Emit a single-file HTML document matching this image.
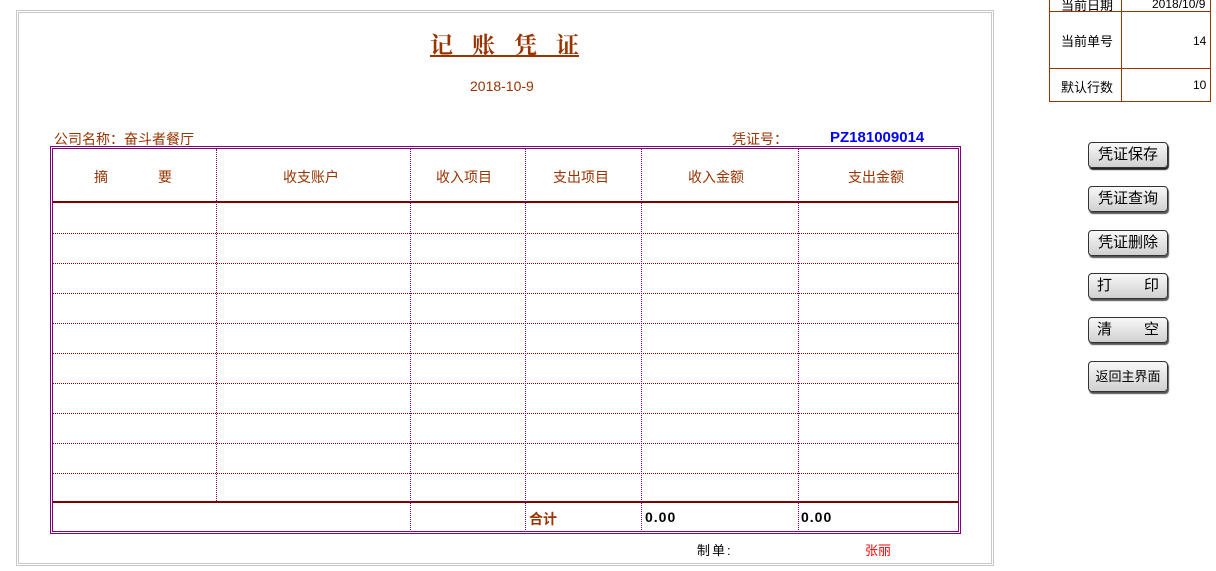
<!DOCTYPE html>
<html><head><meta charset="utf-8"><style>
body{margin:0;width:1216px;height:571px;background:#fff;position:relative;overflow:hidden;font-family:"Liberation Sans","Noto Sans CJK SC",sans-serif}
.a{position:absolute}
.t{position:absolute;font-size:14px;color:#993300;white-space:nowrap}
.h{position:absolute;left:53px;width:905px;height:0;border-top:1px dotted #800000}
.v{position:absolute;width:0;border-left:1px dotted #800080}
.btn{position:absolute;left:1088px;width:78px;height:24px;border:1px solid #333;border-radius:4px;background:linear-gradient(#f8f8f8,#d0d0d0);box-shadow:1px 2px 1px #555;font-size:15px;color:#000;text-align:center;line-height:24px;font-family:"Liberation Sans","Noto Sans CJK SC",sans-serif}
</style></head><body>
<div class="a" style="left:16px;top:10px;width:976px;height:554px;border:1px solid #c8c8c8"></div>
<div class="a" style="left:18px;top:12px;width:972px;height:550px;border:1px solid #c8c8c8"></div>
<div class="t" style="left:430px;top:27px;font-size:23px;font-weight:bold;letter-spacing:19px;text-decoration:underline;color:#993300;font-family:'Noto Serif CJK SC',serif">记账凭<span style="letter-spacing:0">证</span></div>
<div class="t" style="left:470px;top:78px;font-size:14px">2018-10-9</div>
<div class="t" style="left:54px;top:129px">公司名称：奋斗者餐厅</div>
<div class="t" style="left:732px;top:129px">凭证号：</div>
<div class="t" style="left:830px;top:129px;color:#0000ff;font-weight:bold;font-size:15px">PZ181009014</div>
<div class="a" style="left:50px;top:146px;width:909px;height:386px;border:1px solid #800080"></div>
<div class="a" style="left:52px;top:148px;width:905px;height:382px;border:1px solid #800080"></div>
<div class="a" style="left:53px;top:201px;width:905px;height:2px;background:#800000"></div>
<div class="a" style="left:53px;top:501px;width:905px;height:2px;background:#800000"></div>
<div class="h" style="top:233px"></div><div class="h" style="top:263px"></div><div class="h" style="top:293px"></div><div class="h" style="top:323px"></div><div class="h" style="top:353px"></div><div class="h" style="top:383px"></div><div class="h" style="top:413px"></div><div class="h" style="top:443px"></div><div class="h" style="top:473px"></div>
<div class="v" style="left:216px;top:149px;height:352px"></div>
<div class="v" style="left:410px;top:149px;height:381px"></div>
<div class="v" style="left:525px;top:149px;height:381px"></div>
<div class="v" style="left:641px;top:149px;height:381px"></div>
<div class="v" style="left:798px;top:149px;height:381px"></div>
<div class="t" style="left:94px;top:167px">摘</div><div class="t" style="left:158px;top:167px">要</div>
<div class="t" style="left:283px;top:167px">收支账户</div>
<div class="t" style="left:436px;top:167px">收入项目</div>
<div class="t" style="left:553px;top:167px">支出项目</div>
<div class="t" style="left:688px;top:167px">收入金额</div>
<div class="t" style="left:848px;top:167px">支出金额</div>
<div class="t" style="left:529px;top:509px;font-weight:bold">合计</div>
<div class="t" style="left:645px;top:509px;font-weight:bold;color:#000;letter-spacing:1px">0.00</div>
<div class="t" style="left:801px;top:509px;font-weight:bold;color:#000;letter-spacing:1px">0.00</div>
<div class="t" style="left:697px;top:540px;font-size:13px;color:#000;letter-spacing:2px">制单:</div>
<div class="t" style="left:865px;top:540px;font-size:13px;color:#ff0000">张丽</div>
<div class="a" style="left:1049px;top:-2px;width:160px;height:103px;border:1px solid #993300;border-top:none"></div>
<div class="a" style="left:1121px;top:0;width:1px;height:102px;background:#993300"></div>
<div class="a" style="left:1049px;top:11px;width:161px;height:1px;background:#993300"></div>
<div class="a" style="left:1049px;top:68px;width:161px;height:1px;background:#993300"></div>
<div class="t" style="left:1061px;top:-5px;font-size:13px;color:#000">当前日期</div>
<div class="t" style="left:1152px;top:-3px;font-size:12px;color:#000">2018/10/9</div>
<div class="t" style="left:1061px;top:31px;font-size:13px;color:#000">当前单号</div>
<div class="t" style="left:1193px;top:34px;font-size:12px;color:#000">14</div>
<div class="t" style="left:1061px;top:77px;font-size:13px;color:#000">默认行数</div>
<div class="t" style="left:1193px;top:78px;font-size:12px;color:#000">10</div>
<div class="btn" style="top:142px;box-shadow:1px 2px 1px #222">凭证保存</div>
<div class="btn" style="top:186px">凭证查询</div>
<div class="btn" style="top:230px">凭证删除</div>
<div class="btn" style="top:273px;text-align:left;padding:0 8px;width:62px">打<span style="float:right">印</span></div>
<div class="btn" style="top:317px;text-align:left;padding:0 8px;width:62px">清<span style="float:right">空</span></div>
<div class="btn" style="top:361px;height:29px;line-height:29px;font-size:13px">返回主界面</div>
</body></html>
